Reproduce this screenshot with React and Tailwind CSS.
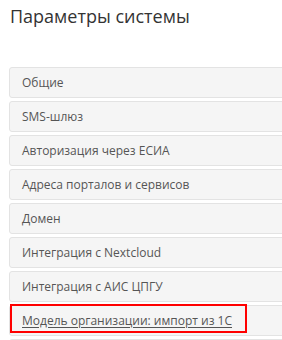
import React from "react";

const items = [
  "Общие",
  "SMS-шлюз",
  "Авторизация через ЕСИА",
  "Адреса порталов и сервисов",
  "Домен",
  "Интеграция с Nextcloud",
  "Интеграция с АИС ЦПГУ",
  "Модель организации: импорт из 1С",
  "",
];

export default function App() {
  return (
    <div
      className="w-[282px] h-[340px] overflow-hidden bg-white"
      style={{ fontFamily: '"Open Sans", "DejaVu Sans", sans-serif' }}
    >
      <h1 className="pl-[10px] pt-[4px] text-[18px] leading-[24px] text-[#333]">
        Параметры системы
      </h1>

      <div className="mt-[39px] ml-[9px] w-[300px] flex flex-col gap-[3px]">
        {items.map((item, i) => (
          <div
            key={i}
            className="relative h-[31px] shrink-0 rounded-[3px] border border-[#e3e3e3] bg-[#f5f5f5] pl-[12px] flex items-center"
          >
            <span
              className={
                "text-[12px] text-[#555] " + (i === 7 ? "underline underline-offset-2" : "")
              }
            >
              {item}
            </span>
            {i === 7 && (
              <div className="absolute left-0 top-[-2px] w-[237px] h-[29px] border-2 border-[#f00]" />
            )}
          </div>
        ))}
      </div>
    </div>
  );
}
